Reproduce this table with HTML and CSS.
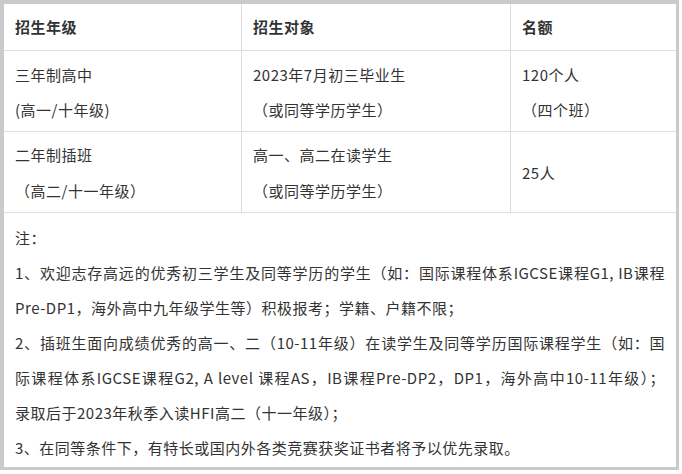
FILE: index.html
```html
<!DOCTYPE html>
<html lang="zh-CN">
<head>
<meta charset="utf-8">
<title>招生计划</title>
<link rel="stylesheet" href="styles.css">
</head>
<body>
<div class="frame">
  <div class="grid">
    <div class="cell head">招生年级</div>
    <div class="cell head">招生对象</div>
    <div class="cell head last">名额</div>

    <div class="cell"><div>三年制高中</div><div>(高一/十年级)</div></div>
    <div class="cell"><div>2023年7月初三毕业生</div><div>（或同等学历学生）</div></div>
    <div class="cell last"><div>120个人</div><div>（四个班）</div></div>

    <div class="cell row2"><div>二年制插班</div><div>（高二/十一年级）</div></div>
    <div class="cell row2"><div>高一、高二在读学生</div><div>（或同等学历学生）</div></div>
    <div class="cell last mid"><div>25人</div></div>

    <div class="notes">
      <p>注：</p>
      <p><span class="ln full">1、欢迎志存高远的优秀初三学生及同等学历的学生（如：国际课程体系IGCSE课程G1, IB课程</span><span class="ln">Pre-DP1，海外高中九年级学生等）积极报考；学籍、户籍不限；</span></p>
      <p><span class="ln full">2、插班生面向成绩优秀的高一、二（10-11年级）在读学生及同等学历国际课程学生（如：国</span><span class="ln full">际课程体系IGCSE课程G2, A level 课程AS，IB课程Pre-DP2，DP1，海外高中10-11年级）；</span><span class="ln">录取后于2023年秋季入读HFI高二（十一年级）；</span></p>
      <p>3、在同等条件下，有特长或国内外各类竞赛获奖证书者将予以优先录取。</p>
    </div>
  </div>
</div>
</body>
</html>
```

FILE: styles.css
```css
html, body {
  margin: 0;
  padding: 0;
  background: #ffffff;
}

body {
  font-family: "Noto Sans CJK SC", "Noto Sans", sans-serif;
  font-size: 15px;
  letter-spacing: 0.5px;
  color: #333333;
}

.frame {
  width: 679px;
  height: 470px;
  box-sizing: border-box;
  border-style: solid;
  border-color: #cacaca;
  border-width: 4px 3px 3px 4px;
  background: #ffffff;
}

.grid {
  display: grid;
  grid-template-columns: 238px 269px 165px;
  grid-template-rows: 47px 81px 81px 1fr;
  height: 100%;
}

.cell {
  box-sizing: border-box;
  border-right: 1px solid #dddddd;
  border-bottom: 1px solid #dddddd;
  padding: 6px 11px 0 11px;
  line-height: 35px;
  white-space: nowrap;
}

.cell.head {
  font-weight: bold;
  padding-top: 5px;
}

.cell.row2 {
  padding-top: 5px;
  line-height: 36px;
}

.cell.last {
  border-right: none;
}

.cell.mid {
  display: flex;
  align-items: center;
  padding-top: 0;
}

.notes {
  grid-column: 1 / 4;
  padding: 7px 11px 0 11px;
  line-height: 35px;
}

.notes p {
  margin: 0;
}

.ln {
  display: block;
  white-space: nowrap;
}

.ln.full {
  text-align: justify;
  text-align-last: justify;
}
```
